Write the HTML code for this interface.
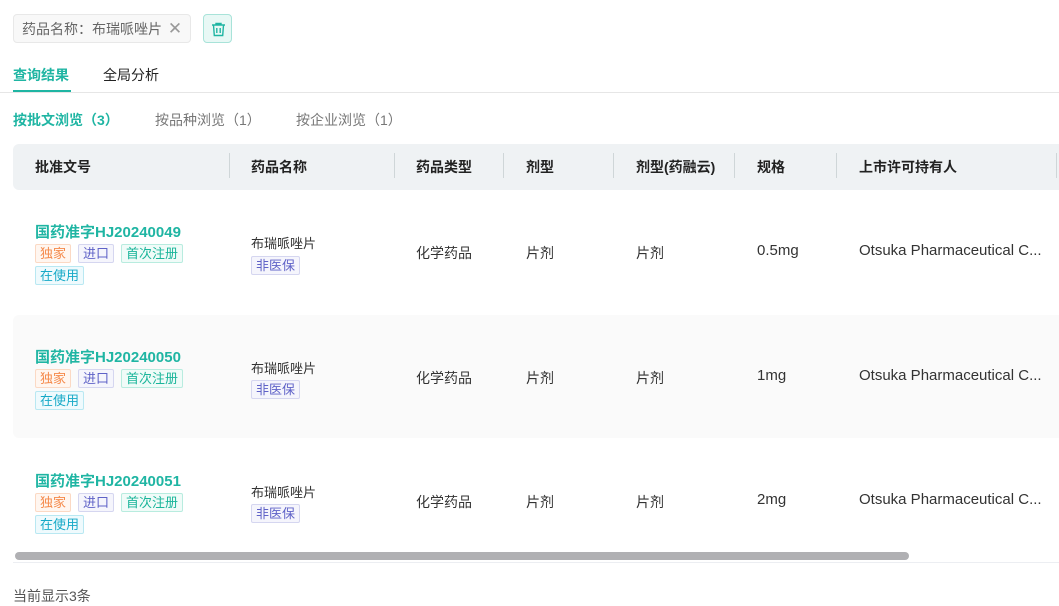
<!DOCTYPE html>
<html><head><meta charset="utf-8"><style>
*{margin:0;padding:0;box-sizing:border-box}
body{width:1059px;height:606px;overflow:hidden;background:#fff;font-family:"Liberation Sans","Noto Sans CJK SC",sans-serif;font-size:14px;color:#333;position:relative}
.a{position:absolute;white-space:nowrap}
.chip{left:13px;top:14px;width:178px;height:29px;border:1px solid #e8e8e8;background:#f8f8f8;border-radius:4px;color:#666;font-size:14px;line-height:27px;padding-left:8px}
.trash{left:203px;top:14px;width:29px;height:29px;border:1px solid #a8e3d9;background:#e8f8f5;border-radius:4px}
.hdr{left:13px;top:144px;width:1060px;height:46px;background:#eff2f4;border-radius:6px}
.th{top:144px;line-height:46px;font-weight:bold;color:#222}
.sep{top:153px;width:1px;height:25px;background:#cfd6d8}
.row2{left:13px;top:315px;width:1060px;height:123px;background:#fafafa;border-radius:6px}
.code{color:#1fb5a3;font-weight:bold;font-size:15px}
.tag{display:inline-block;font-size:13px;line-height:17px;padding:0 4px;border:1px solid;border-radius:2px;margin-right:7px}
.o{color:#f5894a;border-color:#fbd9c4;background:#fff6f0}
.p{color:#5f62c7;border-color:#d5d6f0;background:#f5f5fc}
.g{color:#1ab59a;border-color:#b8ecdf;background:#f0fbf8}
.c{color:#16a9c7;border-color:#b9e8f2;background:#effafd}
.td{color:#333}
.sp{font-size:15px}
</style></head><body>
<div class="a chip">药品名称：布瑞哌唑片 <span style="color:#999;font-size:17px;margin-left:2px">✕</span></div>
<div class="a trash"><svg width="29" height="29" viewBox="0 0 29 29"><g fill="none" stroke="#1fb5a3" stroke-width="1.4"><path d="M8 10h13M12 10V8.5h5V10M9.5 10l.8 10.5h8.4l.8-10.5M12.8 13v5M16.2 13v5"/></g></svg></div>
<div class="a" style="left:13px;top:65px;color:#1fb5a3;font-weight:bold">查询结果</div>
<div class="a" style="left:13px;top:90px;width:58px;height:3px;background:#1fb5a3"></div>
<div class="a" style="left:103px;top:65px;color:#222">全局分析</div>
<div class="a" style="left:0;top:92px;width:1059px;height:1px;background:#e6e6e6"></div>
<div class="a" style="left:13px;top:110px;color:#1fb5a3;font-weight:bold">按批文浏览（3）</div>
<div class="a" style="left:155px;top:110px;color:#777">按品种浏览（1）</div>
<div class="a" style="left:296px;top:110px;color:#777">按企业浏览（1）</div>
<div class="a hdr"></div>
<div class="a th" style="left:35px">批准文号</div>
<div class="a th" style="left:251px">药品名称</div>
<div class="a th" style="left:416px">药品类型</div>
<div class="a th" style="left:526px">剂型</div>
<div class="a th" style="left:636px">剂型(药融云)</div>
<div class="a th" style="left:757px">规格</div>
<div class="a th" style="left:859px">上市许可持有人</div>
<div class="a sep" style="left:229px"></div><div class="a sep" style="left:394px"></div><div class="a sep" style="left:503px"></div><div class="a sep" style="left:613px"></div><div class="a sep" style="left:734px"></div><div class="a sep" style="left:836px"></div><div class="a sep" style="left:1056px"></div>
<div class="a row2"></div>

<div class="a code" style="left:35px;top:221px">国药准字HJ20240049</div>
<div class="a" style="left:35px;top:244px"><span class="tag o">独家</span><span class="tag p">进口</span><span class="tag g">首次注册</span></div>
<div class="a" style="left:35px;top:266px"><span class="tag c">在使用</span></div>
<div class="a td" style="left:251px;top:233px;font-size:13px">布瑞哌唑片</div>
<div class="a" style="left:251px;top:256px"><span class="tag p">非医保</span></div>
<div class="a td" style="left:416px;top:243px">化学药品</div>
<div class="a td" style="left:526px;top:243px">片剂</div>
<div class="a td" style="left:636px;top:243px">片剂</div>
<div class="a td sp" style="left:757px;top:242px">0.5mg</div>
<div class="a td" style="left:859px;top:242px;font-size:15px">Otsuka Pharmaceutical C...</div>

<div class="a code" style="left:35px;top:346px">国药准字HJ20240050</div>
<div class="a" style="left:35px;top:369px"><span class="tag o">独家</span><span class="tag p">进口</span><span class="tag g">首次注册</span></div>
<div class="a" style="left:35px;top:391px"><span class="tag c">在使用</span></div>
<div class="a td" style="left:251px;top:358px;font-size:13px">布瑞哌唑片</div>
<div class="a" style="left:251px;top:380px"><span class="tag p">非医保</span></div>
<div class="a td" style="left:416px;top:368px">化学药品</div>
<div class="a td" style="left:526px;top:368px">片剂</div>
<div class="a td" style="left:636px;top:368px">片剂</div>
<div class="a td sp" style="left:757px;top:367px">1mg</div>
<div class="a td" style="left:859px;top:367px;font-size:15px">Otsuka Pharmaceutical C...</div>

<div class="a code" style="left:35px;top:470px">国药准字HJ20240051</div>
<div class="a" style="left:35px;top:493px"><span class="tag o">独家</span><span class="tag p">进口</span><span class="tag g">首次注册</span></div>
<div class="a" style="left:35px;top:515px"><span class="tag c">在使用</span></div>
<div class="a td" style="left:251px;top:482px;font-size:13px">布瑞哌唑片</div>
<div class="a" style="left:251px;top:504px"><span class="tag p">非医保</span></div>
<div class="a td" style="left:416px;top:492px">化学药品</div>
<div class="a td" style="left:526px;top:492px">片剂</div>
<div class="a td" style="left:636px;top:492px">片剂</div>
<div class="a td sp" style="left:757px;top:491px">2mg</div>
<div class="a td" style="left:859px;top:491px;font-size:15px">Otsuka Pharmaceutical C...</div>

<div class="a" style="left:15px;top:552px;width:894px;height:8px;background:#b0b0b3;border-radius:4px"></div>
<div class="a" style="left:13px;top:562px;width:1046px;height:1px;background:#eceef2"></div>
<div class="a" style="left:13px;top:586px;color:#555">当前显示3条</div>
</body></html>
